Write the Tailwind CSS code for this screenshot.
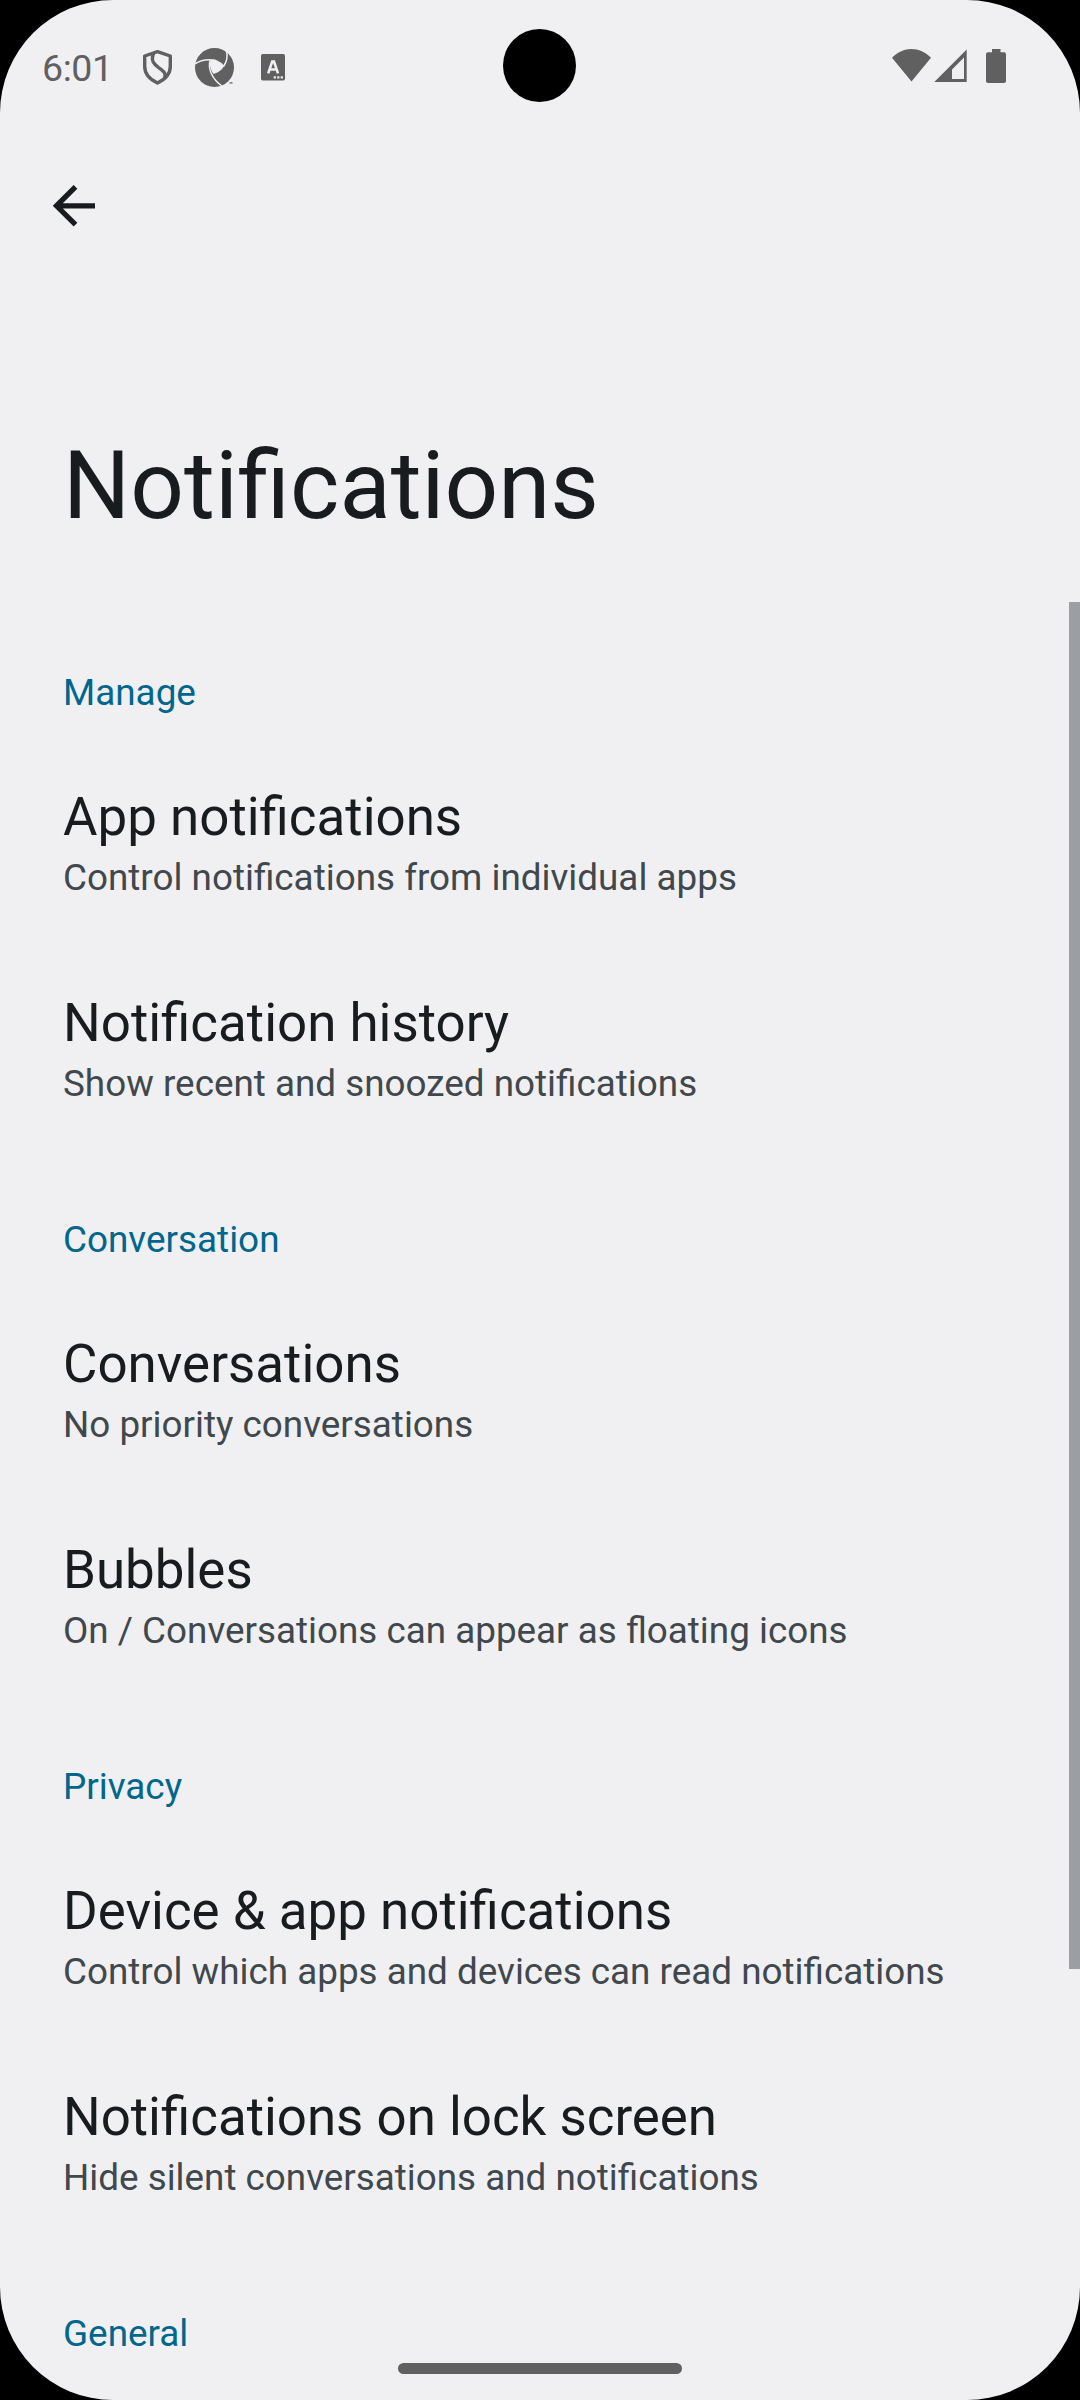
<!DOCTYPE html>
<html lang="en">
<head>
<meta charset="utf-8">
<title>Notifications</title>
<script src="https://cdn.jsdelivr.net/npm/@tailwindcss/browser@4"></script>
</head>
<body class="bg-black">
<div class="relative h-[2400px] w-[1080px] overflow-hidden rounded-[113px] bg-[#f0f0f3] font-[Roboto,sans-serif] text-[#191c1e]">
  <div class="flex h-[132px] items-start pl-[42px] text-[#606060]">
    <span class="mt-[46px] w-[101px] text-[37.5px] leading-[44px] tracking-[-0.4px]">6:01</span>
    <svg class="mt-[49px] h-[37px] w-[30px]" viewBox="0 0 30 37" fill="none" stroke="currentColor" stroke-width="3.4" stroke-linejoin="round"><path d="M14.500 2.700 27.300 7v10.500C27.300 25 22 30.500 14.500 34 7 30.500 1.700 25 1.700 17.500V7Z"/><path d="M10.500 4.500C7.500 12 11 15 15.500 18.500 21 22.500 23.500 24 21.500 29"/></svg>
    <svg class="ml-[22px] mt-[47px] h-[41px] w-[40px]" viewBox="0 0 40 41"><circle cx="19.500" cy="20.500" r="19.500" fill="currentColor"/><path fill="#f0f0f3" d="M15.500 13Q18.500 12.500 21.700 13.300 26 15 29.300 19 25.500 25 18.500 27 13.500 20 15.500 13Z"/><g fill="none" stroke="#f0f0f3" stroke-width="1.500"><path d="M0 16.800C6 12.800 13 11.800 21 13.500"/><path d="M31.300 3.500C33 9.500 32 14.500 28.500 19.500"/><path d="M15 13.500C13 21 16 31.500 27.500 39.500"/></g><path fill="currentColor" d="M34.500 35.200h3v1.200h-3Z"/></svg>
    <svg class="ml-[26px] mt-[54px] h-[27px] w-[25px]" viewBox="0 0 25 27"><rect width="24" height="26.500" rx="1.800" fill="currentColor"/><path d="M7.200 19.300 11.200 7.500h1.800L17 19.300M8.500 15.500h7" fill="none" stroke="#f0f0f3" stroke-width="2.600"/><path fill="#f0f0f3" d="M12.700 22.300h2.200v2.200h-2.200zM16.200 22.300h2.200v2.200h-2.200zM19.700 22.300h2.200v2.200h-2.200z"/></svg>
    <svg class="ml-auto mt-[49px] h-[33px] w-[39px]" viewBox="0 0 39 33" fill="currentColor"><path d="M0 8.800C11-2.800 28-2.800 39 8.800L19.500 32.500Z"/></svg>
    <svg class="ml-[3px] mt-[49px] h-[33px] w-[33px]" viewBox="0 0 33 33"><path fill="currentColor" fill-rule="evenodd" d="M32.700 .5V33H.3ZM30 8.500 18 20.500V30H30Z"/></svg>
    <svg class="ml-[19px] mr-[74px] mt-[49px] h-[34px] w-[20px]" viewBox="0 0 20 34" fill="currentColor"><path d="M6 0h8.500v3.300H18a2 2 0 0 1 2 2V32a2 2 0 0 1-2 2H2a2 2 0 0 1-2-2V5.300a2 2 0 0 1 2-2h4Z"/></svg>
  </div>
  <div class="absolute left-[503.3px] top-[29px] size-[73px] rounded-full bg-black"></div>
  <header class="h-[477px] px-[63px] pt-[53px]">
    <svg class="-ml-[10px] h-[42px] w-[42px]" viewBox="0 0 42 42" fill="none" stroke="currentColor" stroke-width="5.200"><path d="M22.500 1.800 3.500 20.800 22.500 39.700M3.500 20.800H42"/></svg>
    <h1 class="mt-[204px] text-[94.3px] leading-[110px]">Notifications</h1>
  </header>
  <main class="px-[63px]">
    <section>
      <h2 class="h-[135px] pt-[62px] text-[36.87px] leading-[43px] text-[#00668b]">Manage</h2>
      <div class="h-[206px] pt-[42px]"><h3 class="text-[52.9px] leading-[62px]">App notifications</h3><p class="pt-2 text-[36.85px] leading-[43px] text-[#41484d]">Control notifications from individual apps</p></div>
      <div class="h-[206px] pt-[42px]"><h3 class="text-[52.9px] leading-[62px]">Notification history</h3><p class="pt-2 text-[36.85px] leading-[43px] text-[#41484d]">Show recent and snoozed notifications</p></div>
    </section>
    <section>
      <h2 class="h-[135px] pt-[62px] text-[36.87px] leading-[43px] text-[#00668b]">Conversation</h2>
      <div class="h-[206px] pt-[42px]"><h3 class="text-[52.9px] leading-[62px]">Conversations</h3><p class="pt-2 text-[36.85px] leading-[43px] text-[#41484d]">No priority conversations</p></div>
      <div class="h-[206px] pt-[42px]"><h3 class="text-[52.9px] leading-[62px]">Bubbles</h3><p class="pt-2 text-[36.82px] leading-[43px] text-[#41484d]">On / Conversations can appear as floating icons</p></div>
    </section>
    <section>
      <h2 class="h-[135px] pt-[62px] text-[36.87px] leading-[43px] text-[#00668b]">Privacy</h2>
      <div class="h-[206px] pt-[42px]"><h3 class="text-[52.9px] leading-[62px]">Device &amp; app notifications</h3><p class="pt-2 text-[36.85px] leading-[43px] text-[#41484d]">Control which apps and devices can read notifications</p></div>
      <div class="h-[206px] pt-[42px]"><h3 class="text-[52.85px] leading-[62px]">Notifications on lock screen</h3><p class="pt-2 text-[36.82px] leading-[43px] text-[#41484d]">Hide silent conversations and notifications</p></div>
    </section>
    <section>
      <h2 class="pt-[62px] text-[36.87px] leading-[43px] text-[#00668b]">General</h2>
    </section>
  </main>
  <div class="absolute right-0 top-[602px] h-[1367px] w-[11px] bg-[#9b9fa4]"></div>
  <div class="absolute left-[398px] top-[2363px] h-[11px] w-[284px] rounded-full bg-[#606060]"></div>
</div>
</body>
</html>
